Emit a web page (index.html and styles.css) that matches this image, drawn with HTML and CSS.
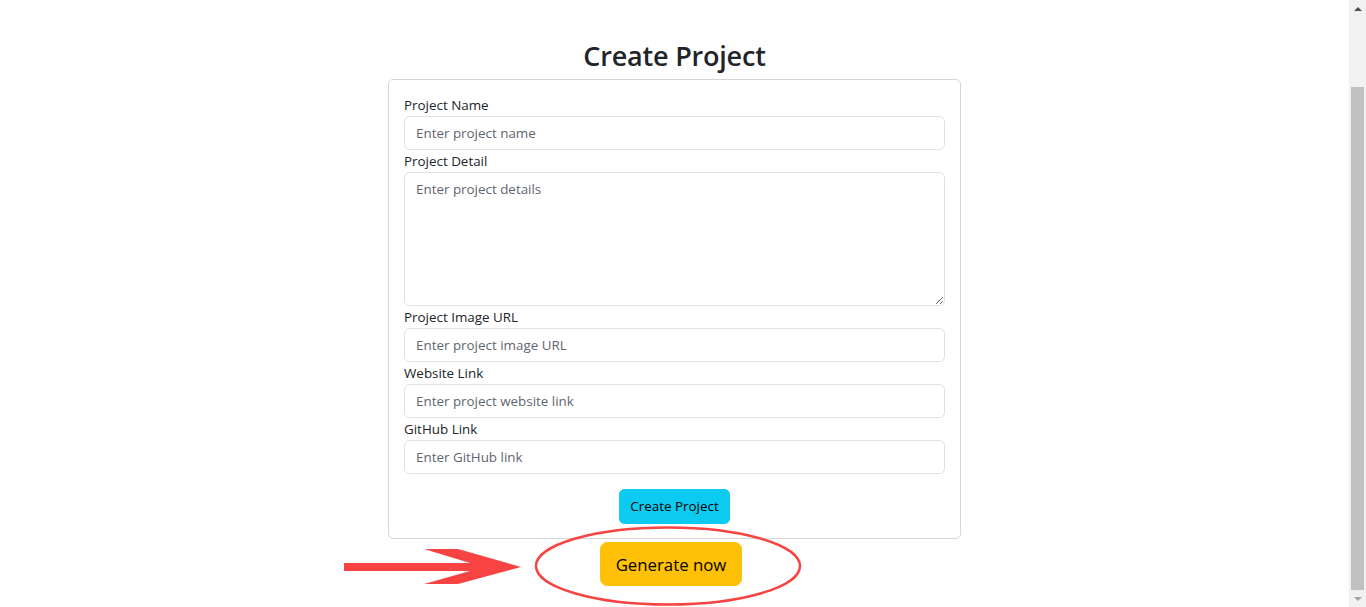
FILE: index.html
```html
<!DOCTYPE html>
<html lang="en">
<head>
<meta charset="utf-8">
<title>Create Project</title>
<link rel="stylesheet" href="styles.css">
</head>
<body>
<div class="page">
  <main class="container">
    <h2 class="title">Create Project</h2>
    <form class="card">
      <div class="field">
        <label class="label">Project Name</label>
        <input class="control" type="text" placeholder="Enter project name">
      </div>
      <div class="field">
        <label class="label">Project Detail</label>
        <textarea class="control area" placeholder="Enter project details"></textarea>
      </div>
      <div class="field">
        <label class="label">Project Image URL</label>
        <input class="control" type="text" placeholder="Enter project image URL">
      </div>
      <div class="field">
        <label class="label">Website Link</label>
        <input class="control" type="text" placeholder="Enter project website link">
      </div>
      <div class="field">
        <label class="label">GitHub Link</label>
        <input class="control" type="text" placeholder="Enter GitHub link">
      </div>
      <div class="actions">
        <button type="button" class="btn btn-info">Create Project</button>
      </div>
    </form>
    <div class="generate">
      <button type="button" class="btn btn-warning btn-lg">Generate now</button>
    </div>
  </main>
  <svg class="annot" width="1349" height="607" viewBox="0 0 1349 607" aria-hidden="true">
    <polygon points="344,563 470,563 424,549 458,549 521,567 458,584 424,584 470,571 344,571" fill="#f84343"/>
    <ellipse cx="668" cy="566" rx="132" ry="38.5" fill="none" stroke="#f84343" stroke-width="2.5"/>
  </svg>
</div>
<div class="scrollbar">
  <div class="sb-arrow up"></div>
  <div class="sb-track"><div class="sb-thumb"></div></div>
  <div class="sb-arrow down"></div>
</div>
</body>
</html>
```
FILE: styles.css
```css
* { box-sizing: border-box; }
html, body { height: 100%; }
body {
  margin: 0;
  display: flex;
  overflow: hidden;
  background: #fff;
  font-family: "Open Sans", "Noto Sans", sans-serif;
  color: #212529;
}
.page {
  position: relative;
  flex: 1;
  height: 607px;
  overflow: hidden;
}
.container {
  width: 573px;
  margin: 0 auto;
  padding-top: 38px;
  display: flex;
  flex-direction: column;
}
.title {
  margin: 0 0 5px;
  font-size: 27px;
  font-weight: 600;
  line-height: 36px;
  text-align: center;
  letter-spacing: -0.2px;
}
.card {
  border: 1px solid #d6d6d6;
  border-radius: 5px;
  padding: 14px 15px 14px;
  display: flex;
  flex-direction: column;
}
.field { display: flex; flex-direction: column; }
.label {
  font-size: 13.4px;
  line-height: 20.7px;
  height: 21.7px;
  padding-top: 1px;
}
.control {
  width: 100%;
  height: 34.4px;
  border: 1px solid #dee2e6;
  border-radius: 5.4px;
  padding: 5px 11px;
  font-family: inherit;
  font-size: 13.4px;
  color: #212529;
  background: #fff;
  outline: none;
}
.control::placeholder { color: #5f6670; }
.area {
  height: 134.4px;
  resize: vertical;
  padding-top: 6px;
  line-height: 21px;
}
.actions {
  display: flex;
  justify-content: center;
  margin-top: 15px;
}
.btn {
  font-family: inherit;
  border: 1px solid transparent;
  color: #000;
  cursor: pointer;
}
.btn-info {
  background: #0dcaf0;
  border-color: #0dcaf0;
  font-size: 13.4px;
  line-height: 21.7px;
  height: 34.4px;
  padding: 5px 10.8px;
  border-radius: 5.4px;
}
.btn-warning {
  background: #ffc107;
  border-color: #ffc107;
}
.btn-lg {
  font-size: 16.8px;
  line-height: 27px;
  height: 44px;
  padding: 7.5px 14.4px;
  border-radius: 7.2px;
}
.generate {
  display: flex;
  justify-content: center;
  margin-top: 3.5px;
  padding-right: 7px;
}
.annot {
  position: absolute;
  top: 0;
  left: 0;
  pointer-events: none;
}
.scrollbar {
  width: 17px;
  height: 607px;
  background: #f1f1f1;
  display: flex;
  flex-direction: column;
}
.sb-arrow {
  height: 17px;
  display: flex;
  align-items: center;
  justify-content: center;
}
.sb-arrow::before {
  content: "";
  border-left: 4px solid transparent;
  border-right: 4px solid transparent;
}
.sb-arrow.up::before { border-bottom: 4px solid #505050; }
.sb-arrow.down::before { border-top: 4px solid #a3a3a3; }
.sb-track {
  flex: 1;
  padding: 70px 2px 0;
  display: flex;
}
.sb-thumb {
  flex: 1;
  background: #c1c1c1;
}
```
